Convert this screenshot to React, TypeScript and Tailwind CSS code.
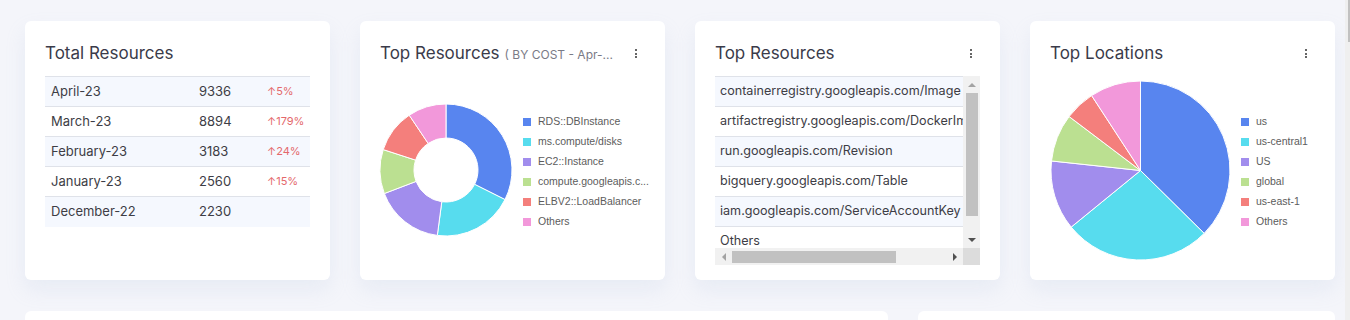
import React from "react"

const FONT = "font-['Inter','Open_Sans',sans-serif]"

type Slice = { label: string; value: number; color: string }

const costSlices: Slice[] = [
  { label: "RDS::DBInstance", value: 0.324, color: "#5885ef" },
  { label: "ms.compute/disks", value: 0.197, color: "#57dcee" },
  { label: "EC2::Instance", value: 0.171, color: "#a18ded" },
  { label: "compute.googleapis.c...", value: 0.108, color: "#bbe091" },
  { label: "ELBV2::LoadBalancer", value: 0.106, color: "#f47f7c" },
  { label: "Others", value: 0.094, color: "#f298da" },
]

const locationSlices: Slice[] = [
  { label: "us", value: 0.374, color: "#5885ef" },
  { label: "us-central1", value: 0.267, color: "#57dcee" },
  { label: "US", value: 0.126, color: "#a18ded" },
  { label: "global", value: 0.086, color: "#bbe091" },
  { label: "us-east-1", value: 0.055, color: "#f47f7c" },
  { label: "Others", value: 0.092, color: "#f298da" },
]

const months = [
  { m: "April-23", n: "9336", p: "5%" },
  { m: "March-23", n: "8894", p: "179%" },
  { m: "February-23", n: "3183", p: "24%" },
  { m: "January-23", n: "2560", p: "15%" },
  { m: "December-22", n: "2230", p: "" },
]

const resources = [
  "containerregistry.googleapis.com/Image",
  "artifactregistry.googleapis.com/DockerImage",
  "run.googleapis.com/Revision",
  "bigquery.googleapis.com/Table",
  "iam.googleapis.com/ServiceAccountKey",
  "Others",
]

function pt(cx: number, cy: number, r: number, f: number) {
  const a = f * Math.PI * 2
  return [cx + r * Math.sin(a), cy - r * Math.cos(a)]
}

function slicePath(cx: number, cy: number, R: number, r: number, f0: number, f1: number) {
  const large = f1 - f0 > 0.5 ? 1 : 0
  const [x0, y0] = pt(cx, cy, R, f0)
  const [x1, y1] = pt(cx, cy, R, f1)
  if (r === 0) {
    return `M${cx},${cy} L${x0},${y0} A${R},${R} 0 ${large} 1 ${x1},${y1} Z`
  }
  const [x2, y2] = pt(cx, cy, r, f1)
  const [x3, y3] = pt(cx, cy, r, f0)
  return `M${x0},${y0} A${R},${R} 0 ${large} 1 ${x1},${y1} L${x2},${y2} A${r},${r} 0 ${large} 0 ${x3},${y3} Z`
}

function Pie({ data, size, inner }: { data: Slice[]; size: number; inner: number }) {
  const c = size / 2
  const R = c - 1
  let acc = 0
  return (
    <svg width={size} height={size} viewBox={`0 0 ${size} ${size}`}>
      {data.map((s) => {
        const f0 = acc
        acc += s.value
        return (
          <path
            key={s.label}
            d={slicePath(c, c, R, inner, f0, Math.min(acc, 0.99999))}
            fill={s.color}
            stroke="#fff"
            strokeWidth={1}
          />
        )
      })}
    </svg>
  )
}

function Legend({ data }: { data: Slice[] }) {
  return (
    <div className="flex flex-col gap-[7px] pt-[3px] font-['Liberation_Sans',Arial,sans-serif] text-[10.5px] leading-[13px] text-[#5c5c5c]">
      {data.map((s) => (
        <div key={s.label} className="flex items-center gap-[7px]">
          <span className="w-[8px] h-[8px]" style={{ background: s.color }} />
          <span className="whitespace-nowrap">{s.label}</span>
        </div>
      ))}
    </div>
  )
}

function Kebab() {
  return (
    <div className="flex flex-col gap-[1.5px] items-center w-[4px] mt-[-4px]">
      <span className="w-[2px] h-[2px] bg-[#666]" />
      <span className="w-[2px] h-[2px] bg-[#666]" />
      <span className="w-[2px] h-[2px] bg-[#666]" />
    </div>
  )
}

function Card({ children }: { children: React.ReactNode }) {
  return (
    <div className="w-[305px] h-[259px] bg-white rounded-[6px] shadow-[0_10px_20px_rgba(170,185,215,0.16)] flex flex-col">
      {children}
    </div>
  )
}

function Title({ children, menu = true }: { children: React.ReactNode; menu?: boolean }) {
  return (
    <div className="h-[55px] pl-[20px] pr-[27px] pt-[20px] flex items-start justify-between">
      <div className="text-[17px] leading-[24px] text-[#3a3b4a] whitespace-nowrap flex items-baseline">{children}</div>
      {menu && (
        <div className="pt-[12px]">
          <Kebab />
        </div>
      )}
    </div>
  )
}

export default function App() {
  return (
    <div className={`flex h-[320px] overflow-hidden bg-[#f4f5fa] ${FONT}`}>
      <div className="flex-1 pl-[25px] pr-[10px] pt-[21px]">
        <div className="flex gap-[30px]">
          <Card>
            <Title menu={false}>Total Resources</Title>
            <div className="mx-[20px] border-t border-[#dfe2e9] text-[13px] text-[#3d3d45]">
              {months.map((r, i) => (
                <div
                  key={r.m}
                  className={`h-[30px] grid grid-cols-[148px_68px_1fr] items-center px-[6px] whitespace-nowrap ${i % 2 === 0 ? "bg-[#f5f8fe]" : "bg-white"} ${i < months.length - 1 ? "border-b border-[#dfe2e9]" : ""}`}
                >
                  <span>{r.m}</span>
                  <span>{r.n}</span>
                  <span className="text-[11px] text-[#e4686b] whitespace-nowrap">{r.p ? `↑${r.p}` : ""}</span>
                </div>
              ))}
            </div>
          </Card>

          <Card>
            <Title>
              <span>Top Resources</span>
              <span className="ml-[5px] text-[12px] text-[#7a7a86]">( BY COST - Apr-...</span>
            </Title>
            <div className="h-[188px] flex items-center pl-[19px] gap-[10px]">
              <Pie data={costSlices} size={134} inner={32} />
              <Legend data={costSlices} />
            </div>
          </Card>

          <Card>
            <Title>Top Resources</Title>
            <div className="mx-[20px] flex flex-col">
              <div className="flex h-[172px]">
                <div className="w-[248px] overflow-hidden border-t border-[#dfe2e9] text-[12.6px] text-[#3d3d45]">
                  {resources.map((r, i) => (
                    <div
                      key={r}
                      className={`h-[30px] shrink-0 flex items-center pl-[5px] whitespace-nowrap ${i % 2 === 0 ? "bg-[#f5f8fe]" : "bg-white"} border-b border-[#dfe2e9]`}
                    >
                      {r}
                    </div>
                  ))}
                </div>
                <div className="w-[17px] bg-[#f1f1f1] flex flex-col items-center">
                  <div className="h-[17px] flex items-center justify-center">
                    <span className="w-0 h-0 border-x-[4px] border-x-transparent border-b-[4px] border-b-[#a3a3a3]" />
                  </div>
                  <div className="w-[12px] h-[123px] bg-[#c1c1c1]" />
                  <div className="flex-1" />
                  <div className="h-[17px] flex items-center justify-center">
                    <span className="w-0 h-0 border-x-[4px] border-x-transparent border-t-[4px] border-t-[#505050]" />
                  </div>
                </div>
              </div>
              <div className="flex h-[17px]">
                <div className="w-[248px] bg-[#f1f1f1] flex items-center">
                  <div className="w-[17px] flex items-center justify-center">
                    <span className="w-0 h-0 border-y-[4px] border-y-transparent border-r-[4px] border-r-[#a3a3a3]" />
                  </div>
                  <div className="h-[12px] w-[164px] bg-[#c1c1c1]" />
                  <div className="flex-1" />
                  <div className="w-[17px] flex items-center justify-center">
                    <span className="w-0 h-0 border-y-[4px] border-y-transparent border-l-[4px] border-l-[#505050]" />
                  </div>
                </div>
                <div className="w-[17px] bg-[#dcdcdc]" />
              </div>
            </div>
          </Card>

          <Card>
            <Title>Top Locations</Title>
            <div className="h-[188px] flex items-center pl-[20px] gap-[10px]">
              <Pie data={locationSlices} size={181} inner={0} />
              <Legend data={locationSlices} />
            </div>
          </Card>
        </div>

        <div className="flex gap-[30px] mt-[31px]">
          <div className="w-[863px] h-[100px] bg-white rounded-[6px]" />
          <div className="w-[417px] h-[100px] bg-white rounded-[6px]" />
        </div>
      </div>
      <div className="w-[5px] bg-[#efefef] flex justify-end">
        <div className="w-[2px] h-[42px] bg-[#c1c1c1]" />
      </div>
    </div>
  )
}
